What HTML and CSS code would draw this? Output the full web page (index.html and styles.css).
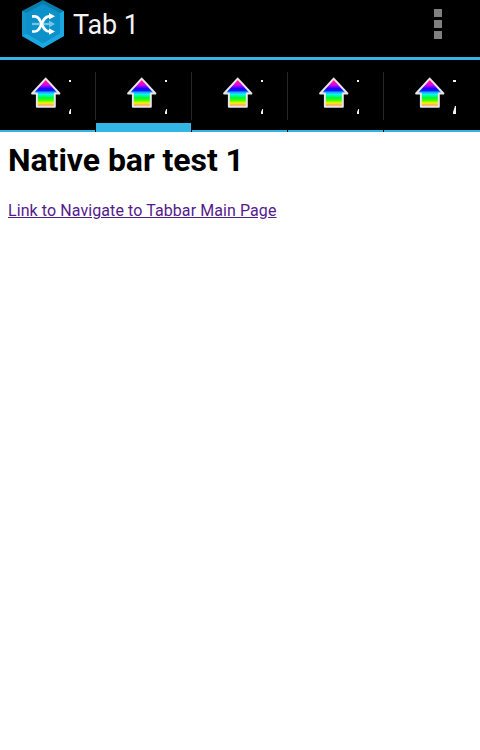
FILE: index.html
```html
<!DOCTYPE html>
<html lang="en">
<head>
<meta charset="utf-8">
<title>Tab 1</title>
<link rel="stylesheet" href="styles.css">
</head>
<body>
<svg class="defs" width="0" height="0" aria-hidden="true">
  <defs>
    <linearGradient id="rainbow" x1="0" y1="0" x2="0" y2="1">
      <stop offset="0" stop-color="#ff2a6a"/>
      <stop offset=".12" stop-color="#ff1493"/>
      <stop offset=".23" stop-color="#d400f5"/>
      <stop offset=".35" stop-color="#2a00ff"/>
      <stop offset=".42" stop-color="#0418ff"/>
      <stop offset=".5" stop-color="#20b4ff"/>
      <stop offset=".57" stop-color="#00ffe0"/>
      <stop offset=".67" stop-color="#00f840"/>
      <stop offset=".77" stop-color="#38ff00"/>
      <stop offset=".87" stop-color="#fff000"/>
      <stop offset=".94" stop-color="#ffa860"/>
      <stop offset="1" stop-color="#ff9a80"/>
    </linearGradient>
    <symbol id="home" viewBox="0 0 32 32">
      <path d="M15.700 1.600 29.400 16.500H24.800V29.700H6.900V16.500H2.100Z" fill="url(#rainbow)" stroke="#e6e6e6" stroke-width="2" stroke-linejoin="round"/>
    </symbol>
  </defs>
</svg>
<header class="bar">
  <svg class="logo" viewBox="0 0 42 48">
    <path d="M21 0 42 11V36L21 48 0 36V11Z" fill="#087cab"/>
    <path d="M0 36 4 33 21 43 38 33V13L42 11V36L21 48Z" fill="#1ba7df"/>
    <path d="M0 11 4 13V33L0 36Z" fill="#1494c9"/>
    <path d="M21 4 38 13V33L21 43 4 33V13Z" fill="#0c91ca"/>
    <path d="M10 24H29" fill="none" stroke="#70c7e8" stroke-width="2.300"/>
    <path d="M27 20.500 33 24 27 27.500Z" fill="#70c7e8"/>
    <g fill="none" stroke="#fff" stroke-width="2.700">
      <path d="M10 16.300H13C20 16.300 19 31.500 27 31.500H29"/>
      <path d="M10 31.500H13C20 31.500 19 16.300 27 16.300H29"/>
    </g>
    <path d="M27 13 33 16.300 27 19.600ZM27 28.200 33 31.500 27 34.800Z" fill="#fff"/>
  </svg>
  <span class="title">Tab 1</span>
  <span class="overflow"><i></i><i></i><i></i></span>
</header>
<nav class="tabs">
  <a class="tab"><svg class="icon"><use href="#home"/></svg><svg class="clip" viewBox="0 0 3 34"><path d="M0 0H2V2H0ZM1.300 29H2V34H0V32Z"/></svg></a>
  <a class="tab active"><svg class="icon"><use href="#home"/></svg><svg class="clip" viewBox="0 0 3 34"><path d="M0 0H2V2H0ZM1.300 29H2V34H0V32Z"/></svg></a>
  <a class="tab"><svg class="icon"><use href="#home"/></svg><svg class="clip" viewBox="0 0 3 34"><path d="M0 0H2V2H0ZM1.300 29H2V34H0V32Z"/></svg></a>
  <a class="tab"><svg class="icon"><use href="#home"/></svg><svg class="clip" viewBox="0 0 3 34"><path d="M0 0H2V2H0ZM1.300 29H2V34H0V32Z"/></svg></a>
  <a class="tab"><svg class="icon"><use href="#home"/></svg><svg class="clip" viewBox="0 0 3 34"><path d="M0 0H3V2H0ZM2 26H3V34H0V32Z"/></svg></a>
</nav>
<main>
  <h1>Native bar test 1</h1>
  <a class="link" href="#">Link to Navigate to Tabbar Main Page</a>
</main>
</body>
</html>
```
FILE: styles.css
```css
* { box-sizing: border-box; }
body { margin: 0; background: #fff; font-family: Roboto, sans-serif; }
.defs { display: block; }
.bar {
  display: flex;
  align-items: flex-start;
  height: 60px;
  padding: 0 38px 0 22px;
  background: #000;
  border-bottom: 3px solid #33b5e5;
}
.logo { width: 42px; height: 48px; }
.title {
  margin-left: 9px;
  font-size: 27px;
  line-height: 51px;
  letter-spacing: -0.1px;
  color: #f3f3f3;
}
.overflow { display: grid; gap: 3px; margin: 9px 0 0 auto; }
.overflow i { width: 8px; height: 8px; background: #808080; }
.tabs {
  display: grid;
  grid-template-columns: repeat(4, 95px) 96px;
  column-gap: 1px;
  height: 72px;
  background: #000;
}
.tab {
  position: relative;
  display: flex;
  align-items: flex-start;
  padding: 17px 0 0 30px;
  border-bottom: 2px solid #33b5e5;
}
.tab.active { border-bottom-width: 9px; }
.tab:not(:last-child)::after {
  content: "";
  position: absolute;
  top: 12px;
  right: -1px;
  width: 1px;
  height: 48px;
  background: #282828;
}
.icon { width: 32px; height: 32px; }
.clip { width: 3px; height: 34px; margin: 3px 0 0 7px; fill: #f3f3f3; }
main { padding: 0 8px; }
h1 { margin: 0; padding-top: 9px; font-size: 32px; line-height: 38px; letter-spacing: -0.05px; font-weight: 700; color: #000; }
.link {
  display: inline-block;
  margin-top: 22px;
  font-size: 16px;
  line-height: 19px;
  letter-spacing: 0.085px;
  color: #551a8b;
}
```
